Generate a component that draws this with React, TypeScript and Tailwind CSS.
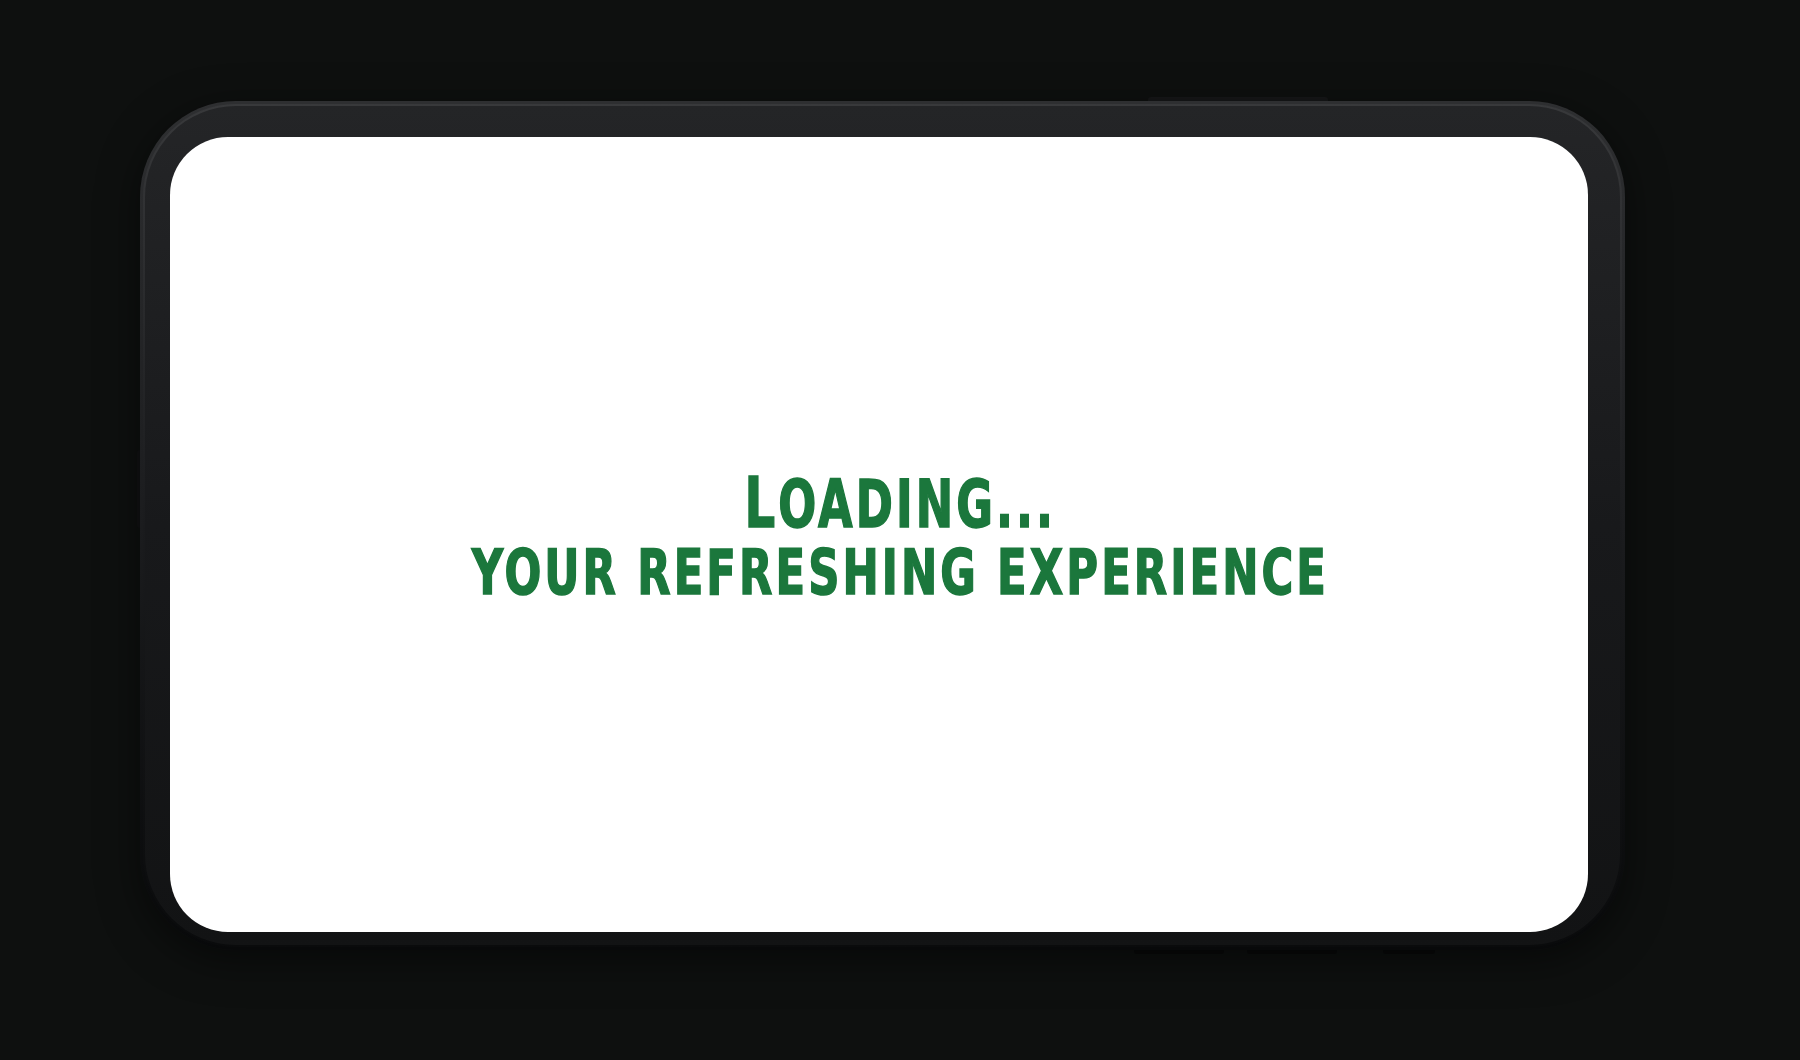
export default function App() {
  return (
    <div className="h-[1060px] w-[1800px] overflow-hidden bg-[#0e100f] pl-[140px] pt-[101px]">
      <div className="relative h-[849px] w-[1485px]">
        {/* side buttons */}
        <div className="absolute left-[1008px] top-[-4px] h-[6px] w-[180px] rounded-t-[3px] bg-[#161718]" />
        <div className="absolute bottom-[-4px] left-[994px] h-[6px] w-[90px] rounded-b-[3px] bg-[#090a0a]" />
        <div className="absolute bottom-[-4px] left-[1107px] h-[6px] w-[90px] rounded-b-[3px] bg-[#090a0a]" />
        <div className="absolute bottom-[-4px] left-[1243px] h-[6px] w-[52px] rounded-b-[3px] bg-[#090a0a]" />
        <div className="absolute left-[-3px] top-[349px] h-[78px] w-[5px] rounded-l-[3px] bg-[#111213]" />

        <div className="relative h-full w-full rounded-[96px] bg-gradient-to-b from-[#2e2f31] via-[#1b1c1e] to-[#08090a] p-[3px] shadow-[0_10px_40px_rgba(0,0,0,0.5)]">
          <div className="h-full w-full rounded-[93px] bg-gradient-to-b from-[#38393b] via-[#1a1b1d] to-[#0a0b0c] p-[2px]">
            <div className="h-full w-full rounded-[91px] bg-gradient-to-b from-[#242527] via-[#18191b] to-[#121314] pb-[13px] pl-[25px] pr-[32px] pt-[31px]">
              <div className="flex h-full w-full flex-col items-center justify-center rounded-[58px] bg-white pl-[42px] pt-[6px]">
                <div className="flex scale-x-[0.765] flex-col items-center font-['DejaVu_Sans_Condensed','DejaVu_Sans',sans-serif] font-bold uppercase tracking-[4px] text-[#1b773c] [-webkit-text-stroke:1.5px_#1b773c]">
                  <div className="h-[69px] leading-[69px]">
                    <span className="text-[70px] leading-[69px]">L</span>
                    <span className="text-[65px] leading-[69px]">oading...</span>
                  </div>
                  <div className="h-[69px] text-[63px] leading-[69px]">Your Refreshing Experience</div>
                </div>
              </div>
            </div>
          </div>
        </div>
      </div>
    </div>
  );
}
